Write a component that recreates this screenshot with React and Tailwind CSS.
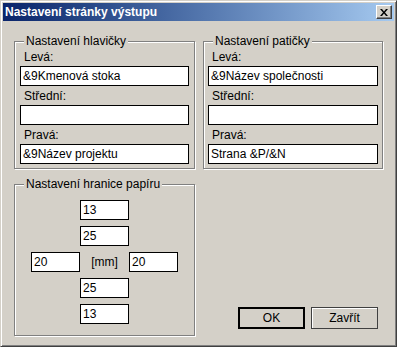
const Field = ({ label, value }) => (
  <>
    <div className="h-[19px] pl-[4px] pt-[3px] leading-[14px]">{label}</div>
    <div className="h-[20px] bg-white border border-black px-[2px] leading-[18px] whitespace-nowrap overflow-hidden">
      {value}
    </div>
  </>
)

const GroupBox = ({ title, className, children }) => (
  <div
    className={`relative border border-[#808080] shadow-[inset_1px_1px_0_#fff,1px_1px_0_#fff] ${className}`}
  >
    <span className="absolute left-[9px] top-[-8px] px-[2px] bg-[#d4d0c8] leading-[14px] whitespace-nowrap">
      {title}
    </span>
    {children}
  </div>
)

const MarginBox = ({ value, className = '' }) => (
  <div className={`h-[20px] bg-white border border-black px-[2px] leading-[18px] ${className}`}>
    {value}
  </div>
)

export default function App() {
  return (
    <div className="w-[397px] h-[347px] bg-[#d4d0c8] border border-t-[#d4d0c8] border-l-[#d4d0c8] border-r-[#404040] border-b-[#404040] shadow-[inset_1px_1px_0_#fff,inset_-1px_-1px_0_#808080] p-[2px] flex flex-col text-[12px] text-black font-['Liberation_Sans',Arial,sans-serif]">
      {/* title bar */}
      <div className="h-[18px] flex items-center justify-between bg-linear-to-r from-[#0a246a] to-[#a6caf0] pl-[2px] pr-[2px]">
        <span className="text-white font-bold leading-[18px]">Nastavení stránky výstupu</span>
        <button
          type="button"
          className="w-[16px] h-[14px] flex items-center justify-center bg-[#d4d0c8] border border-t-white border-l-white border-r-[#404040] border-b-[#404040] shadow-[inset_-1px_-1px_0_#808080]"
        >
          <svg width="8" height="7" viewBox="0 0 8 7">
            <path d="M0 0h2l2 2.5L6 0h2L5 3.5 8 7H6L4 4.5 2 7H0l3-3.5z" fill="#000" />
          </svg>
        </button>
      </div>

      {/* body */}
      <div className="flex-1 px-[11px] flex flex-col">
        <div className="flex gap-[8px] mt-[20px]">
          <GroupBox title="Nastavení hlavičky" className="w-[181px] px-[5px] pt-[5px] pb-[4px]">
            <Field label="Levá:" value="&9Kmenová stoka" />
            <Field label="Střední:" value="" />
            <Field label="Pravá:" value="&9Název projektu" />
          </GroupBox>
          <GroupBox title="Nastavení patičky" className="w-[180px] px-[4px] pt-[5px] pb-[4px]">
            <Field label="Levá:" value="&9Název společnosti" />
            <Field label="Střední:" value="" />
            <Field label="Pravá:" value="Strana &P/&N" />
          </GroupBox>
        </div>

        <div className="flex items-end mt-[15px]">
          <GroupBox title="Nastavení hranice papíru" className="w-[181px] pt-[15px] pb-[11px]">
            <div className="grid grid-cols-[49px_49px_49px] justify-center gap-y-[6px]">
              <MarginBox value="13" className="col-start-2" />
              <MarginBox value="25" className="col-start-2" />
              <MarginBox value="20" className="col-start-1" />
              <div className="h-[20px] leading-[20px] text-center">[mm]</div>
              <MarginBox value="20" />
              <MarginBox value="25" className="col-start-2" />
              <MarginBox value="13" className="col-start-2" />
            </div>
          </GroupBox>

          <div className="flex-1 flex justify-end gap-[6px] mb-[7px] mr-[5px]">
            <button
              type="button"
              className="w-[67px] h-[22px] border-2 border-black bg-[#d4d0c8] font-normal leading-[18px]"
            >
              OK
            </button>
            <button
              type="button"
              className="w-[67px] h-[22px] border border-[#404040] bg-[#d4d0c8] shadow-[inset_1px_1px_0_#fff] font-normal leading-[20px]"
            >
              Zavřít
            </button>
          </div>
        </div>
      </div>
    </div>
  )
}
